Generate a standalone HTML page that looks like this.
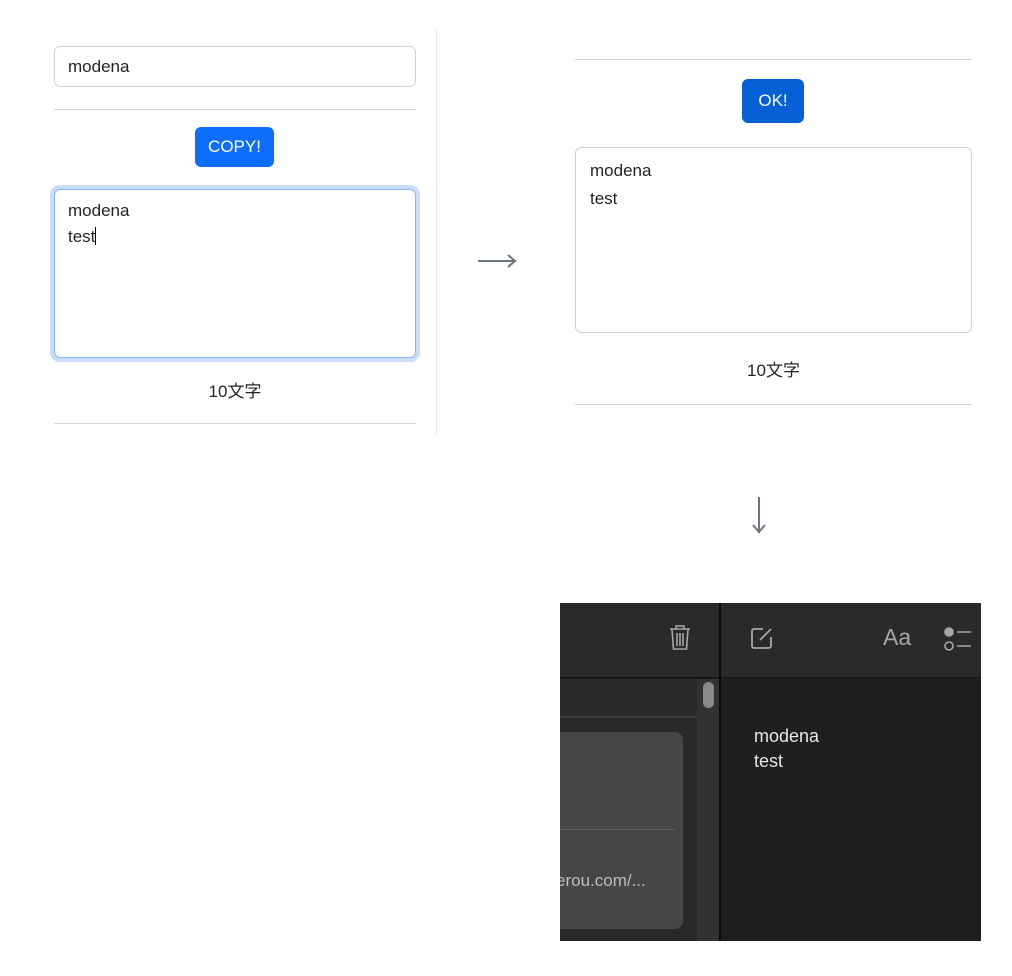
<!DOCTYPE html>
<html><head><meta charset="utf-8"><style>
*{box-sizing:border-box;margin:0;padding:0}
body{width:1012px;height:976px;background:#fff;position:relative;font-family:"Liberation Sans","Noto Sans CJK JP",sans-serif;color:#212529;overflow:hidden}
.a{position:absolute}
.hr{position:absolute;height:1px;background:#d3d4d6}
.t{font-size:17px;line-height:26px}
</style></head><body>
<div class="a" style="left:54px;top:46px;width:362px;height:41px;border:1px solid #ced4da;border-radius:6px;padding:0 13px;line-height:40px;font-size:17px">modena</div>
<div class="hr" style="left:54px;top:109px;width:362px"></div>
<div class="a" style="left:195px;top:127px;width:79px;height:40px;background:#0d6efd;border-radius:6px;color:#fff;font-size:17px;line-height:40px;text-align:center">COPY!</div>
<div class="a" style="left:54px;top:189px;width:362px;height:169px;border:1px solid #86b7fe;border-radius:6px;box-shadow:0 0 0 4px #c9dcfb;padding:8px 13px" ><div class="t">modena</div><div class="t">test<span style="display:inline-block;width:1px;height:18px;background:#000;vertical-align:-3px"></span></div></div>
<div class="a" style="left:54px;top:380px;width:362px;text-align:center;font-size:17px;line-height:24px">10文字</div>
<div class="hr" style="left:54px;top:423px;width:362px"></div>
<div class="a" style="left:436px;top:30px;width:1px;height:404px;background:#e6e6e6"></div>

<svg class="a" style="left:476px;top:250px" width="44" height="22" viewBox="0 0 44 22" fill="none" stroke="#6c7580" stroke-width="2"><path d="M2 11h38M32 5l7 6-7 6"/></svg>
<svg class="a" style="left:748px;top:495px" width="22" height="42" viewBox="0 0 22 42" fill="none" stroke="#6c7580" stroke-width="2"><path d="M11 2v36M5 30l6 7 6-7"/></svg>

<div class="hr" style="left:575px;top:59px;width:397px"></div>
<div class="a" style="left:742px;top:79px;width:62px;height:44px;background:#0560d6;border-radius:6px;color:#fff;font-size:17px;line-height:44px;text-align:center">OK!</div>
<div class="a" style="left:575px;top:147px;width:397px;height:186px;border:1px solid #ced4da;border-radius:6px;padding:9px 14px"><div class="t" style="line-height:28px">modena</div><div class="t" style="line-height:28px">test</div></div>
<div class="a" style="left:575px;top:359px;width:397px;text-align:center;font-size:17px;line-height:24px">10文字</div>
<div class="hr" style="left:575px;top:404px;width:397px"></div>

<div class="a" style="left:560px;top:603px;width:421px;height:338px;background:#1e1e1e;overflow:hidden">
 <div class="a" style="left:0;top:0;width:421px;height:75px;background:#2b2a2b;border-bottom:1px solid #111"></div>
 <div class="a" style="left:0;top:76px;width:159px;height:262px;background:#2a292a"></div>
 <div class="a" style="left:0;top:113px;width:137px;height:2px;background:#3c3b3c"></div>
 <div class="a" style="left:137px;top:76px;width:22px;height:262px;background:#333233"></div>
 <div class="a" style="left:143px;top:79px;width:11px;height:26px;background:#8a898a;border-radius:6px"></div>
 <div class="a" style="left:0;top:129px;width:123px;height:197px;background:#464646;border-radius:0 8px 8px 0"></div>
 <div class="a" style="left:0;top:226px;width:115px;height:1px;background:#5e5e5e"></div>
 <div class="a" style="left:-4px;top:268px;font-size:17px;color:#bdbdbd">erou.com/...</div>
 <div class="a" style="left:159px;top:0;width:2px;height:338px;background:#0a0a0a"></div>
 <svg class="a" style="left:108px;top:20px" width="24" height="30" viewBox="0 0 24 30" fill="none" stroke="#a8a8a8" stroke-width="1.6"><path d="M2 6h20M8 6V3h8v3M4 6l1.5 20h13L20 6M9 10v13M12 10v13M15 10v13"/></svg>
 <svg class="a" style="left:189px;top:22px" width="26" height="26" viewBox="0 0 26 26" fill="none" stroke="#a8a8a8" stroke-width="1.8"><path d="M14 4H5a2 2 0 0 0-2 2v15a2 2 0 0 0 2 2h15a2 2 0 0 0 2-2V12"/><path d="M11 15l11-11"/></svg>
 <div class="a" style="left:323px;top:21px;font-size:23px;color:#a8a8a8">Aa</div>
 <svg class="a" style="left:384px;top:24px" width="30" height="26" viewBox="0 0 30 26" fill="none" stroke="#a8a8a8" stroke-width="1.6"><circle cx="5" cy="5" r="4" fill="#a8a8a8"/><circle cx="5" cy="19" r="4"/><path d="M13 5h14M13 19h14"/></svg>
 <div class="a" style="left:194px;top:121px;font-size:18px;line-height:25px;color:#e6e6e6">modena<br>test</div>
</div>
</body></html>
